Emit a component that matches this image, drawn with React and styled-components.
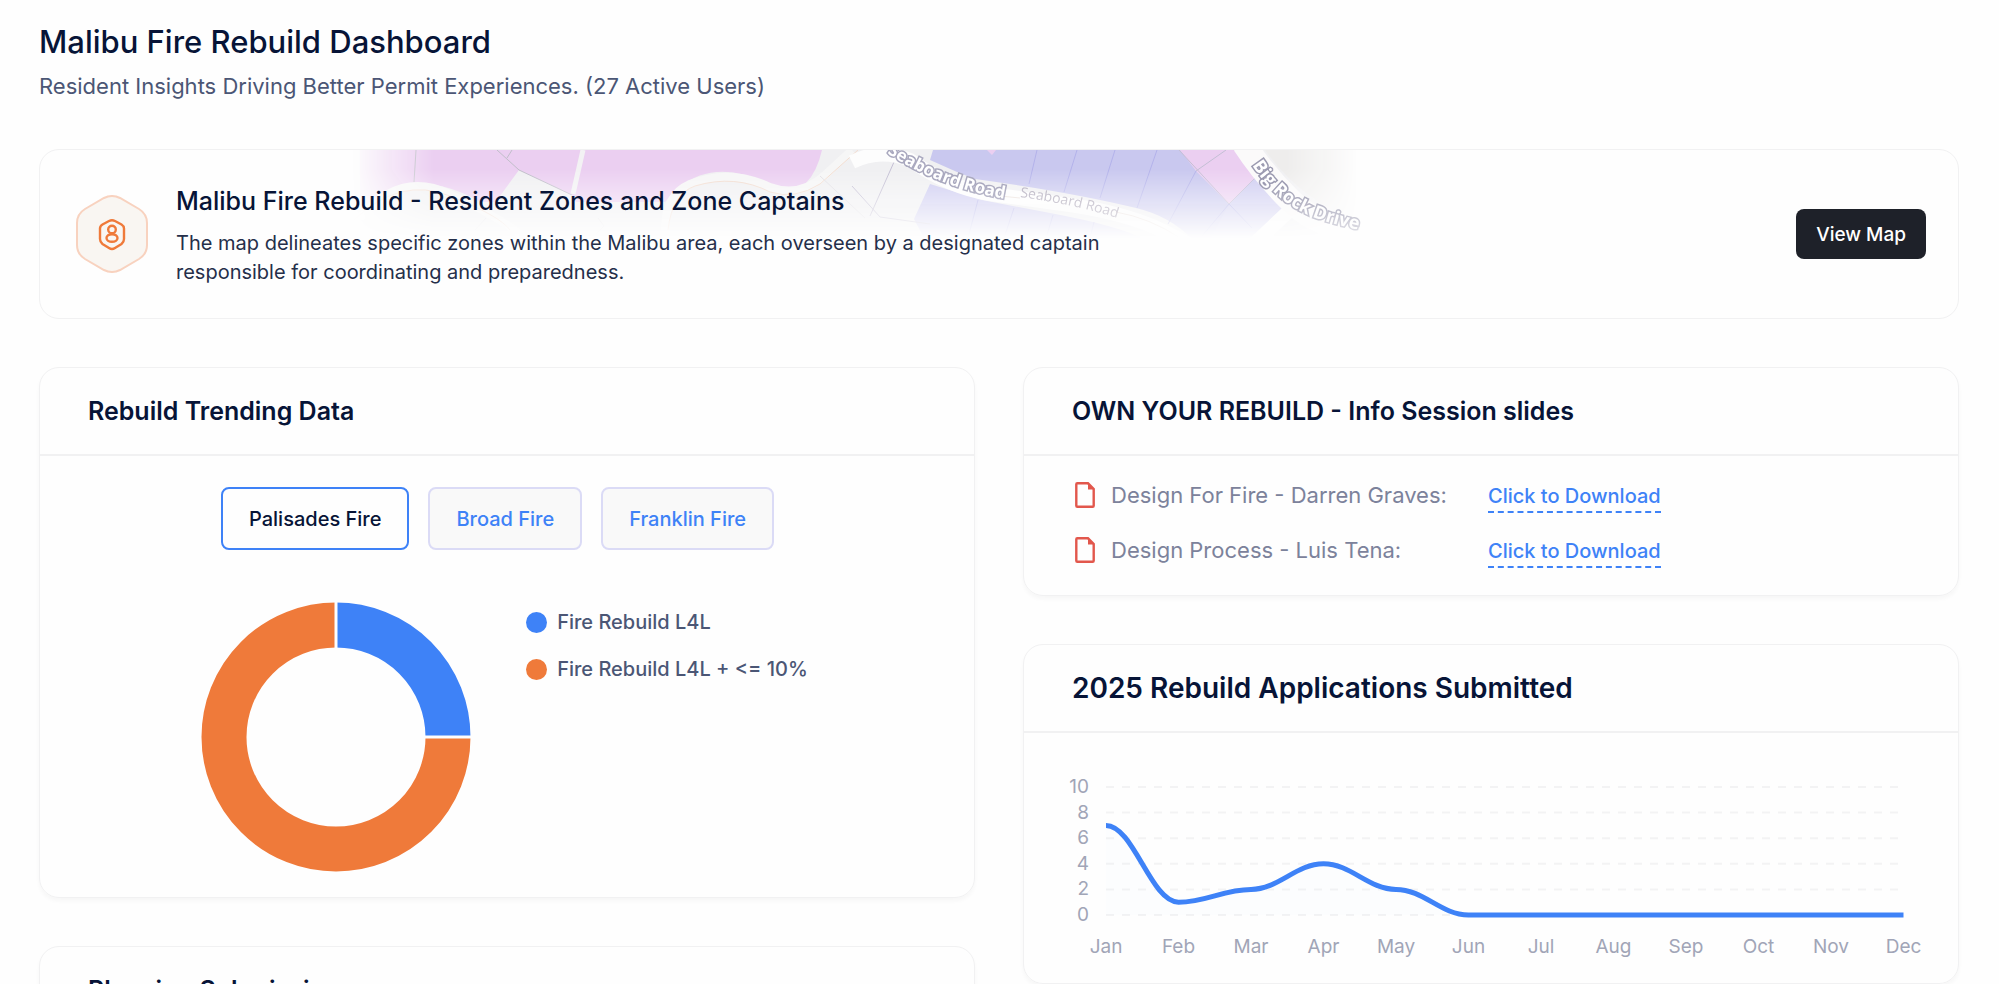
import { useState } from "react";
import styled, { createGlobalStyle } from "styled-components";

const FIRES = ["Palisades Fire", "Broad Fire", "Franklin Fire"];

const SLIDES = [
  { id: 1, label: "Design For Fire - Darren Graves:" },
  { id: 2, label: "Design Process - Luis Tena:" },
];

const LEGEND = [
  { label: "Fire Rebuild L4L", color: "#3e82f7" },
  { label: "Fire Rebuild L4L + <= 10%", color: "#ef7a3a" },
];

const MONTHS = ["Jan", "Feb", "Mar", "Apr", "May", "Jun", "Jul", "Aug", "Sep", "Oct", "Nov", "Dec"];
const SUBMITTED = [7, 1, 2, 4, 2, 0, 0, 0, 0, 0, 0, 0];

export default function App() {
  const [fire, setFire] = useState(FIRES[0]);

  return (
    <PageSC>
      <GlobalStyle />
      <PageHeader>
        <h1>Malibu Fire Rebuild Dashboard</h1>
        <p>Resident Insights Driving Better Permit Experiences. (27 Active Users)</p>
      </PageHeader>

      <Banner>
        <ZoneMap />
        <ZoneBadge />
        <BannerText>
          <h2>Malibu Fire Rebuild - Resident Zones and Zone Captains</h2>
          <p>
            The map delineates specific zones within the Malibu area, each overseen by a designated captain
            responsible for coordinating and preparedness.
          </p>
        </BannerText>
        <MapButton type="button">View Map</MapButton>
      </Banner>

      <Columns>
        <Column>
          <Card>
            <CardHeader><CardTitle>Rebuild Trending Data</CardTitle></CardHeader>
            <TrendingBody>
              <Tabs>
                {FIRES.map((name) => (
                  <Tab key={name} type="button" $active={name === fire} onClick={() => setFire(name)}>
                    {name}
                  </Tab>
                ))}
              </Tabs>
              <DonutRow>
                <Donut />
                <Legend>
                  {LEGEND.map((item) => (
                    <LegendItem key={item.label} $color={item.color}>{item.label}</LegendItem>
                  ))}
                </Legend>
              </DonutRow>
            </TrendingBody>
          </Card>
          <Card>
            <CardHeader><CardTitle>Planning Submissions</CardTitle></CardHeader>
          </Card>
        </Column>

        <Column>
          <Card>
            <CardHeader><CardTitle>OWN YOUR REBUILD - Info Session slides</CardTitle></CardHeader>
            <SlideList>
              {SLIDES.map((slide) => (
                <SlideRow key={slide.id}>
                  <FileIcon />
                  <SlideLabel>{slide.label}</SlideLabel>
                  <DownloadLink href="#">Click to Download</DownloadLink>
                </SlideRow>
              ))}
            </SlideList>
          </Card>
          <Card>
            <CardHeader><CardTitle $large>2025 Rebuild Applications Submitted</CardTitle></CardHeader>
            <ApplicationsChart />
          </Card>
        </Column>
      </Columns>
    </PageSC>
  );
}

function Donut() {
  return (
    <DonutSvg viewBox="0 0 270 270" role="img" aria-label="Fire rebuild share">
      <g fill="none" strokeWidth="45">
        <path d="M135 23A112 112 0 0 1 247 135" stroke="#3e82f7" />
        <path d="M247 135A112 112 0 1 1 135 23" stroke="#ef7a3a" />
      </g>
      <path d="M135 0V46M224 135H270" stroke="#fefefe" strokeWidth="3" />
    </DonutSvg>
  );
}

function ApplicationsChart() {
  const left = 82;
  const step = 72.5;
  const y = (value) => 182 - value * 12.8;
  const x = (i) => left + i * step;

  // horizontal tangents at every month
  const line = SUBMITTED.reduce((d, value, i) => {
    if (i === 0) return `M${x(0)} ${y(value)}`;
    const bend = step * 0.38;
    return `${d}C${x(i - 1) + bend} ${y(SUBMITTED[i - 1])} ${x(i) - bend} ${y(value)} ${x(i)} ${y(value)}`;
  }, "");

  return (
    <ChartSvg viewBox="0 0 934 250" role="img" aria-label="Applications submitted per month">
      {[10, 8, 6, 4, 2, 0].map((tick) => (
        <g key={tick}>
          <path d={`M${left} ${y(tick)}H879`} stroke="#f3f3f4" strokeWidth="2" strokeDasharray="8 8" />
          <text x="65" y={y(tick) + 6} textAnchor="end">{tick}</text>
        </g>
      ))}
      <path d={`${line}V182H${left}Z`} fill="#3e82f7" fillOpacity="0.01" />
      <path d={line} fill="none" stroke="#3e82f7" strokeWidth="5" />
      {MONTHS.map((month, i) => (
        <text key={month} x={x(i)} y="220" textAnchor="middle">{month}</text>
      ))}
    </ChartSvg>
  );
}

function FileIcon() {
  return (
    <svg width="20" height="26" viewBox="0 0 20 26" aria-hidden="true">
      <path d="M13 1.3H2.3Q1.3 1.3 1.3 2.3V23.7Q1.3 24.7 2.3 24.7H17.7Q18.7 24.7 18.7 23.7V7Z" fill="none" stroke="#e2574c" strokeWidth="2.4" />
      <path d="M13 1L19 7.5H13Z" fill="#e2574c" />
    </svg>
  );
}

function ZoneBadge() {
  return (
    <BadgeSvg viewBox="0 0 72 78" aria-hidden="true">
      <path
        d="M28 3Q36 -1 44 3L63 14Q71 19 71 28V50Q71 59 63 64L44 75Q36 79 28 75L9 64Q1 59 1 50V28Q1 19 9 14Z"
        fill="#f9f6f2"
        stroke="#f8d2bf"
        strokeWidth="2"
      />
      <g fill="none" stroke="#ef7a3a" strokeWidth="2.4">
        <path d="M33 26Q36 24.500 39 26L45.500 29.500Q48 31 48 33.500V44Q48 47 45.500 49L39 53Q36 55 33 53L26.500 49Q24 47 24 44V33.500Q24 31 26.500 29.500Z" />
        <circle cx="36" cy="34.500" r="3.800" />
        <ellipse cx="36" cy="43" rx="5.500" ry="3.800" />
      </g>
    </BadgeSvg>
  );
}

function ZoneMap() {
  return (
    <>
      <MapGround viewBox="0 0 1040 96" aria-hidden="true">
        <path d="M0 0H1016V96H0Z" fill="#f0f0f2" />
        {/* pink parcels */}
        <path d="M20 0H482Q477 22 466 33Q452 42 430 34Q375 8 340 37L325 52H140Q110 34 80 34Q62 34 44 48L20 60Z" fill="#ebcff1" />
        <path d="M179 20L160 46L150 60H240L232 45Z" fill="#f0f0f2" />
        <path d="M76 0L74 32M157 0L179 20L232 45M167 8L172 0" fill="none" stroke="#c0bec9" />
        <path d="M243 0L233 44" stroke="#f3f2f4" strokeWidth="5" />
        <path d="M20 68Q60 20 110 44T180 84M325 80Q325 45 350 34Q390 18 430 37Q460 48 485 25L512 0" fill="none" stroke="#f6f6f6" strokeWidth="8" />
        <path d="M14 70Q60 26 110 46T170 80M328 80Q332 44 355 36Q395 24 430 42Q455 50 480 34L518 0" fill="none" stroke="#f3ddd0" />
        <path d="M480 26L525 68M135 80L146 68M258 68L264 76L256 84" fill="none" stroke="#e3e1e6" />
        {/* blue parcels */}
        <path d="M593 0H920V90H853Q830 66 796 58Q730 42 635 29L617 22L590 10Z" fill="#c9c8ef" />
        <path d="M590 34L574 69L585 90H806Q780 76 710 63L642 50Z" fill="#cfcdf1" />
        <path d="M840 0H901L917 26L889 54L856 21ZM647 0H656L652 5Z" fill="#ebcff1" />
        <path d="M917 26L950 58L920 90H870L889 54Z" fill="#cfcdf1" />
        <path
          d="M697 0L689 34M737 0L724 42M775 0L760 48M817 0L797 58M856 21L828 74M889 54L912 78M889 54L862 86M638 50L628 88M674 58L664 88M713 65L706 88M754 72L750 88"
          fill="none"
          stroke="#b3b2ea"
        />
        <path d="M839 0L889 54L917 26M856 21L886 0M554 12L530 66M512 36L540 67L590 74" fill="none" stroke="#c4bfd4" />
        {/* roads */}
        <path d="M512 12Q540 -2 570 10Q610 38 650 44L730 55Q806 66 850 96M948 62L914 94" fill="none" stroke="#fdfdfd" strokeWidth="14" />
        <path d="M925 0H1016V70Q960 50 925 0Z" fill="#eeedec" />
        <path d="M904 -6Q925 26 952 52T1026 82" fill="none" stroke="#fbfafa" strokeWidth="24" />
        <path d="M660 46L680 48M776 62Q810 68 840 88" fill="none" stroke="#eadfda" />
      </MapGround>

      <MapLabels viewBox="0 0 1040 96" aria-hidden="true">
        <path id="seaboard" d="M547 3Q604 41 680 51" fill="none" />
        <path id="seaboardSmall" d="M680 47Q735 54 790 72" fill="none" />
        <path id="bigRock" d="M912 15Q935 50 966 64Q995 77 1070 90" fill="none" />
        <MapLabel $size={17} $color="#fff" stroke="#a9a8be">
          <textPath href="#seaboard">Seaboard Road</textPath>
        </MapLabel>
        <MapLabel $size={14} $color="#bdb8c6" $light>
          <textPath href="#seaboardSmall">Seaboard Road</textPath>
        </MapLabel>
        <MapLabel $size={18} $color="#fff" stroke="#9b9ab0">
          <textPath href="#bigRock">Big Rock Drive</textPath>
        </MapLabel>
      </MapLabels>
    </>
  );
}

const GlobalStyle = createGlobalStyle`
  * {
    box-sizing: border-box;
  }

  body {
    margin: 0;
    background: #fefefe;
    color: #071437;
    font-family: Inter, "Liberation Sans", sans-serif;
    overflow: hidden;
  }

  h1, h2, p, ul {
    margin: 0;
    padding: 0;
  }
`;

const PageSC = styled.main`
  height: 100vh;
  overflow: hidden;
  padding: 20px 40px 0 39px;
`;

const PageHeader = styled.header`
  margin-bottom: 47px;

  h1 {
    font-size: 31px;
    font-weight: 500;
    line-height: 44px;
  }

  p {
    margin-top: 6px;
    font-size: 22px;
    line-height: 32px;
    color: #4b5675;
  }
`;

const Banner = styled.section`
  position: relative;
  display: flex;
  align-items: center;
  min-height: 170px;
  margin-bottom: 48px;
  padding: 0 32px 0 36px;
  border: 1px solid #f1f1f2;
  border-radius: 20px;
  overflow: hidden;
`;

const MapLayer = styled.svg`
  position: absolute;
  top: 0;
  left: 300px;
  width: 1040px;
  height: 96px;
`;

const MapGround = styled(MapLayer)`
  mask-image: linear-gradient(#000 20%, transparent 92%), linear-gradient(90deg, transparent 1%, #000 9%, #000 91%, transparent 98%);
  mask-composite: intersect;
`;

const MapLabels = styled(MapLayer)`
  mask-image: linear-gradient(#000 35%, rgba(0, 0, 0, 0.25) 90%);
`;

const MapLabel = styled.text`
  font-size: ${(props) => props.$size}px;
  font-weight: ${(props) => (props.$light ? 400 : 700)};
  font-family: "Open Sans", sans-serif;
  fill: ${(props) => props.$color};
  stroke-width: ${(props) => (props.$light ? 0 : 3)}px;
  paint-order: stroke;
`;

const BadgeSvg = styled.svg`
  width: 72px;
  height: 78px;
  flex: none;
`;

const BannerText = styled.div`
  position: relative;
  max-width: 960px;
  margin: 0 auto 0 28px;
  padding-top: 2px;

  h2 {
    font-size: 25px;
    font-weight: 500;
    line-height: 36px;
  }

  p {
    margin-top: 10px;
    font-size: 20px;
    line-height: 29px;
    color: #252f4a;
  }
`;

const MapButton = styled.button`
  height: 50px;
  flex: none;
  padding: 0 20px;
  border: 0;
  border-radius: 8px;
  background: #1e2129;
  color: #fff;
  font: 500 19px Inter, sans-serif;
  cursor: pointer;
`;

const Columns = styled.div`
  display: grid;
  grid-template-columns: 1fr 1fr;
  align-items: start;
  gap: 48px;
`;

const Column = styled.div`
  display: flex;
  flex-direction: column;
  gap: 48px;
`;

const Card = styled.section`
  border: 1px solid #f1f1f2;
  border-radius: 20px;
  box-shadow: 0 3px 4px rgba(0, 0, 0, 0.03);
`;

const CardHeader = styled.div`
  display: flex;
  align-items: center;
  height: 88px;
  padding: 0 48px;
  border-bottom: 2px solid #f1f1f2;
`;

const CardTitle = styled.h2`
  font-size: ${(props) => (props.$large ? 28 : 25)}px;
  font-weight: 600;
`;

const TrendingBody = styled.div`
  padding: 31px 0 25px;
`;

const Tabs = styled.div`
  display: flex;
  justify-content: center;
  margin-bottom: 52px;
`;

const Tab = styled.button`
  height: 63px;
  margin-right: 19px;
  padding: 0 26px;
  border: 2px solid ${(props) => (props.$active ? "#3e82f7" : "#dbdbf6")};
  border-radius: 8px;
  background: ${(props) => (props.$active ? "#fefefe" : "#f9f9f9")};
  color: ${(props) => (props.$active ? "#071437" : "#3e82f7")};
  font: 500 20px Inter, sans-serif;
  cursor: pointer;
`;

const DonutRow = styled.div`
  display: flex;
  justify-content: center;
  gap: 55px;
`;

const DonutSvg = styled.svg`
  width: 270px;
  height: 270px;
`;

const Legend = styled.ul`
  display: flex;
  flex-direction: column;
  gap: 19px;
  padding: 6px 5px 0 0;
  list-style: none;
`;

const LegendItem = styled.li`
  display: flex;
  align-items: center;
  gap: 10px;
  font-size: 20px;
  font-weight: 500;
  line-height: 28px;
  color: #4b5675;

  &::before {
    content: "";
    width: 21px;
    height: 21px;
    border-radius: 50%;
    background: ${(props) => props.$color};
  }
`;

const SlideList = styled.ul`
  padding: 11px 48px 18px 51px;
  list-style: none;
`;

const SlideRow = styled.li`
  display: grid;
  grid-template-columns: 20px 361px auto;
  column-gap: 16px;
  align-items: center;
  justify-content: start;
  height: 55px;
`;

const SlideLabel = styled.span`
  font-size: 22px;
  line-height: 32px;
  color: #7c829b;
`;

const DownloadLink = styled.a`
  margin-top: 5px;
  border-bottom: 2px dashed #3e82f7;
  font-size: 20px;
  font-weight: 500;
  line-height: 30px;
  color: #3e82f7;
  text-decoration: none;
`;

const ChartSvg = styled.svg`
  display: block;
  width: 100%;

  text {
    font-size: 19px;
    fill: #a1a5b7;
  }
`;
